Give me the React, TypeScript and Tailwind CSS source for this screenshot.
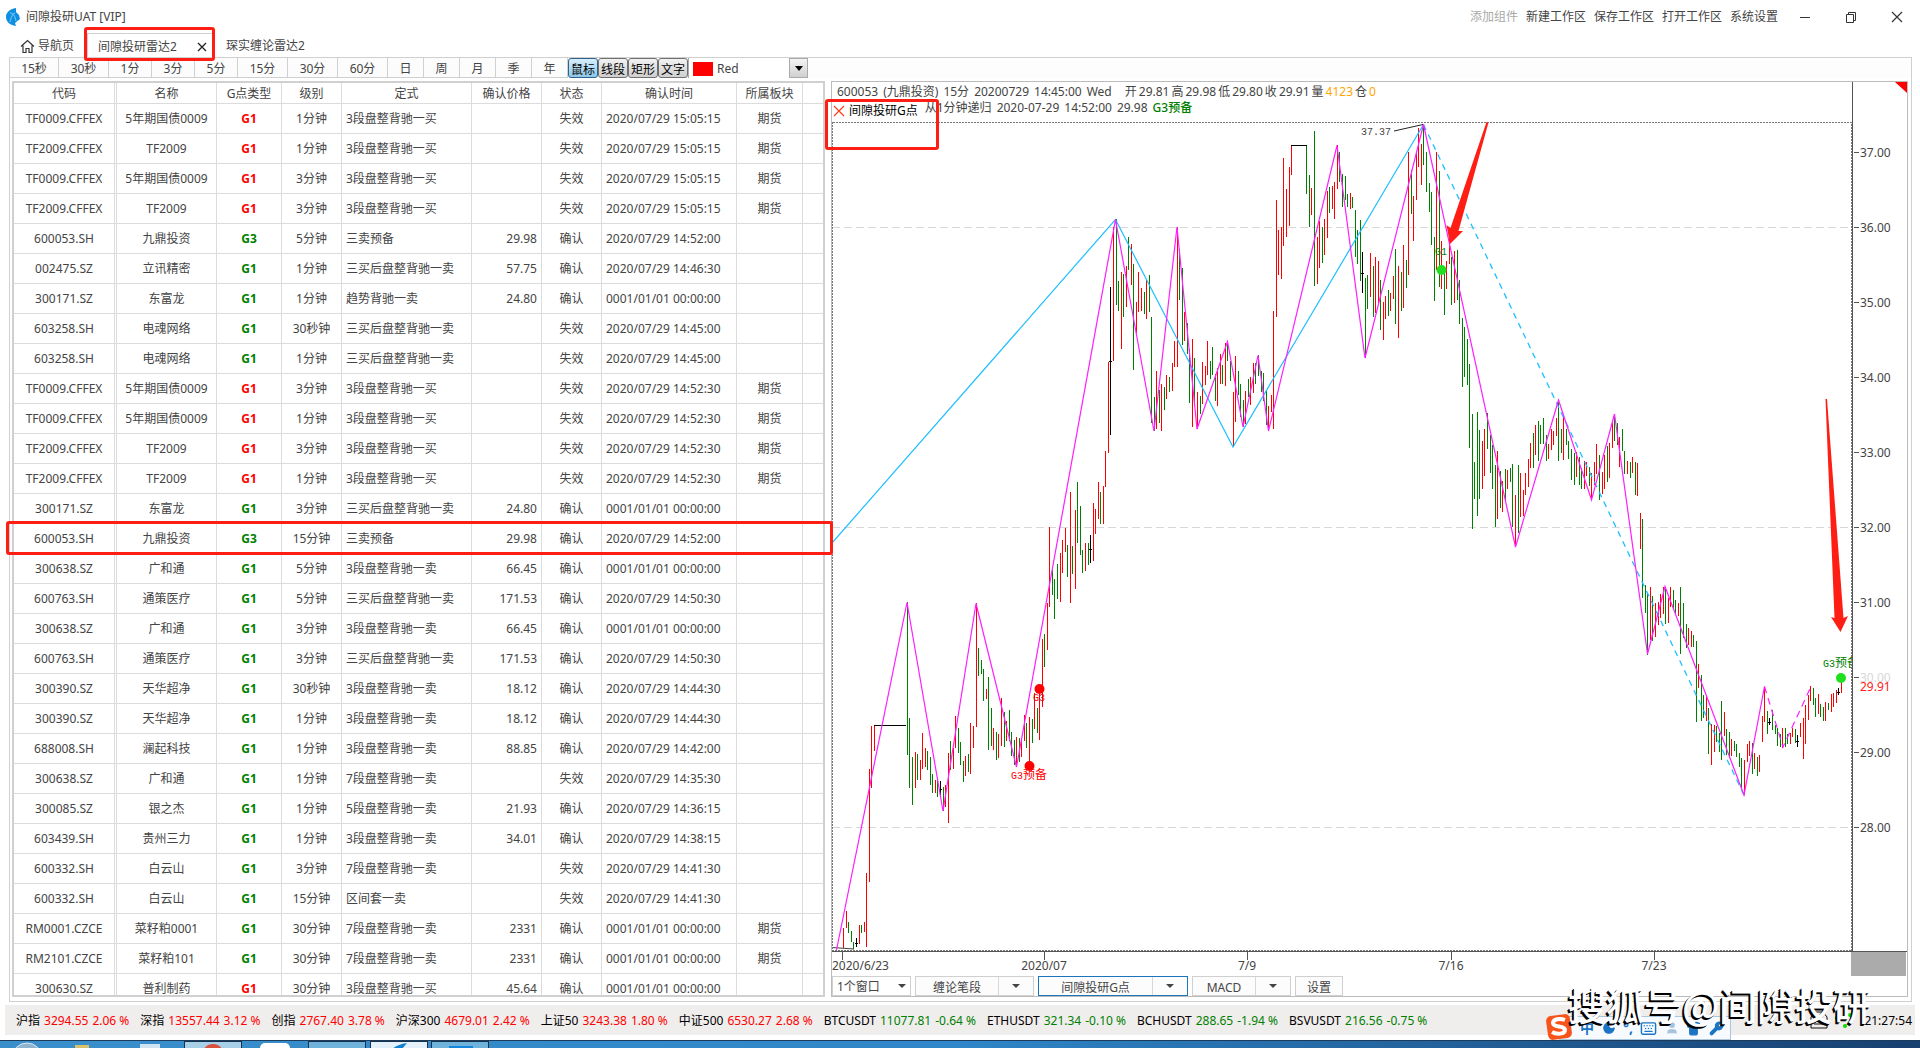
import { useState } from "react";
import { Moon, Shirt, Wrench, Keyboard, User } from "lucide-react";

const FONT = "font-['Noto_Sans','Noto_Sans_CJK_SC',sans-serif]";

const periods = [
  { label: "15秒", width: "w-[49px]" },
  { label: "30秒", width: "w-[50px]" },
  { label: "1分", width: "w-[43px]" },
  { label: "3分", width: "w-[43px]" },
  { label: "5分", width: "w-[43px]" },
  { label: "15分", width: "w-[50px]" },
  { label: "30分", width: "w-[50px]" },
  { label: "60分", width: "w-[50px]" },
  { label: "日", width: "w-9" },
  { label: "周", width: "w-9" },
  { label: "月", width: "w-9" },
  { label: "季", width: "w-9" },
  { label: "年", width: "w-9" },
];

const columns = [
  { label: "代码", width: "w-[103px]" },
  { label: "名称", width: "w-[100px]" },
  { label: "G点类型", width: "w-[65px]" },
  { label: "级别", width: "w-[60px]" },
  { label: "定式", width: "w-[130px]" },
  { label: "确认价格", width: "w-[70px]" },
  { label: "状态", width: "w-[60px]" },
  { label: "确认时间", width: "w-[135px]" },
  { label: "所属板块", width: "w-[66px]" },
  { label: "", width: "w-5" },
];

// code, name, type, level, pattern, price, status, time, sector
const rows: string[][] = [
  ["TF0009.CFFEX", "5年期国债0009", "G1", "1分钟", "3段盘整背驰一买", "", "失效", "2020/07/29 15:05:15", "期货"],
  ["TF2009.CFFEX", "TF2009", "G1", "1分钟", "3段盘整背驰一买", "", "失效", "2020/07/29 15:05:15", "期货"],
  ["TF0009.CFFEX", "5年期国债0009", "G1", "3分钟", "3段盘整背驰一买", "", "失效", "2020/07/29 15:05:15", "期货"],
  ["TF2009.CFFEX", "TF2009", "G1", "3分钟", "3段盘整背驰一买", "", "失效", "2020/07/29 15:05:15", "期货"],
  ["600053.SH", "九鼎投资", "G3", "5分钟", "三卖预备", "29.98", "确认", "2020/07/29 14:52:00", ""],
  ["002475.SZ", "立讯精密", "G1", "1分钟", "三买后盘整背驰一卖", "57.75", "确认", "2020/07/29 14:46:30", ""],
  ["300171.SZ", "东富龙", "G1", "1分钟", "趋势背驰一卖", "24.80", "确认", "0001/01/01 00:00:00", ""],
  ["603258.SH", "电魂网络", "G1", "30秒钟", "三买后盘整背驰一卖", "", "失效", "2020/07/29 14:45:00", ""],
  ["603258.SH", "电魂网络", "G1", "1分钟", "三买后盘整背驰一卖", "", "失效", "2020/07/29 14:45:00", ""],
  ["TF0009.CFFEX", "5年期国债0009", "G1", "3分钟", "3段盘整背驰一买", "", "失效", "2020/07/29 14:52:30", "期货"],
  ["TF0009.CFFEX", "5年期国债0009", "G1", "1分钟", "3段盘整背驰一买", "", "失效", "2020/07/29 14:52:30", "期货"],
  ["TF2009.CFFEX", "TF2009", "G1", "3分钟", "3段盘整背驰一买", "", "失效", "2020/07/29 14:52:30", "期货"],
  ["TF2009.CFFEX", "TF2009", "G1", "1分钟", "3段盘整背驰一买", "", "失效", "2020/07/29 14:52:30", "期货"],
  ["300171.SZ", "东富龙", "G1", "3分钟", "三买后盘整背驰一卖", "24.80", "确认", "0001/01/01 00:00:00", ""],
  ["600053.SH", "九鼎投资", "G3", "15分钟", "三卖预备", "29.98", "确认", "2020/07/29 14:52:00", ""],
  ["300638.SZ", "广和通", "G1", "5分钟", "3段盘整背驰一卖", "66.45", "确认", "0001/01/01 00:00:00", ""],
  ["600763.SH", "通策医疗", "G1", "5分钟", "三买后盘整背驰一卖", "171.53", "确认", "2020/07/29 14:50:30", ""],
  ["300638.SZ", "广和通", "G1", "3分钟", "3段盘整背驰一卖", "66.45", "确认", "0001/01/01 00:00:00", ""],
  ["600763.SH", "通策医疗", "G1", "3分钟", "三买后盘整背驰一卖", "171.53", "确认", "2020/07/29 14:50:30", ""],
  ["300390.SZ", "天华超净", "G1", "30秒钟", "3段盘整背驰一卖", "18.12", "确认", "2020/07/29 14:44:30", ""],
  ["300390.SZ", "天华超净", "G1", "1分钟", "3段盘整背驰一卖", "18.12", "确认", "2020/07/29 14:44:30", ""],
  ["688008.SH", "澜起科技", "G1", "1分钟", "3段盘整背驰一卖", "88.85", "确认", "2020/07/29 14:42:00", ""],
  ["300638.SZ", "广和通", "G1", "1分钟", "7段盘整背驰一卖", "", "失效", "2020/07/29 14:35:30", ""],
  ["300085.SZ", "银之杰", "G1", "1分钟", "5段盘整背驰一卖", "21.93", "确认", "2020/07/29 14:36:15", ""],
  ["603439.SH", "贵州三力", "G1", "1分钟", "3段盘整背驰一卖", "34.01", "确认", "2020/07/29 14:38:15", ""],
  ["600332.SH", "白云山", "G1", "3分钟", "7段盘整背驰一卖", "", "失效", "2020/07/29 14:41:30", ""],
  ["600332.SH", "白云山", "G1", "15分钟", "区间套一卖", "", "失效", "2020/07/29 14:41:30", ""],
  ["RM0001.CZCE", "菜籽粕0001", "G1", "30分钟", "7段盘整背驰一卖", "2331", "确认", "0001/01/01 00:00:00", "期货"],
  ["RM2101.CZCE", "菜籽粕101", "G1", "30分钟", "7段盘整背驰一卖", "2331", "确认", "0001/01/01 00:00:00", "期货"],
  ["300630.SZ", "普利制药", "G1", "30分钟", "3段盘整背驰一买", "45.64", "确认", "0001/01/01 00:00:00", ""],
];

const quotes = [
  { name: "沪指", price: "3294.55", change: "2.06 %", up: true },
  { name: "深指", price: "13557.44", change: "3.12 %", up: true },
  { name: "创指", price: "2767.40", change: "3.78 %", up: true },
  { name: "沪深300", price: "4679.01", change: "2.42 %", up: true },
  { name: "上证50", price: "3243.38", change: "1.80 %", up: true },
  { name: "中证500", price: "6530.27", change: "2.68 %", up: true },
  { name: "BTCUSDT", price: "11077.81", change: "-0.64 %", up: false },
  { name: "ETHUSDT", price: "321.34", change: "-0.10 %", up: false },
  { name: "BCHUSDT", price: "288.65", change: "-1.94 %", up: false },
  { name: "BSVUSDT", price: "216.56", change: "-0.75 %", up: false },
];

// High-low bars. Each entry is "colour x high low" in thirds of a unit from the segment origin.
const segments = [
  {
    x: 830,
    y: 560,
    bars:
      "r 40 1105 1165,r 49 1052 1105,g 55 1085 1120,g 64 1112 1147,g 70 1145 1168,k 79 1135 1162,r 88 1094 1153,g 94 1094 1120,r 103 1087 1116,r 109 940 1160,r 118 628 965,r 124 497 685,r 133 497 572,g 232 127 586,g 238 475 685,g 247 592 734,r 256 577 685,g 262 583 661,r 271 601 661,r 277 520 626,r 286 565 620,g 292 574 631,g 301 590 676,g 307 643 700,r 316 661 700,g 322 655 712,k 331 664 709,g 340 682 754,r 346 676 740,r 355 580 788,g 361 544 631,r 370 565 626,r 376 469 565,g 385 505 580,g 391 547 616,g 400 604 667,r 406 589 649,g 415 583 637,r 421 490 643,r 430 497 565,r 439 130 502,g 445 265 349,g 454 301 343,g 460 328 424,r 469 388 418,g 475 352 571,g 484 445 559,r 490 505 571,g 499 517 601,r 505 523 595,r 514 415 559,g 523 457 562,r 529 484 544,g 538 451 544,g 544 517 589,g 553 541 616,r 559 532 622,g 568 535 607,r 574 541 592,r 583 466 544,g 589 490 565,r 598 472 610,g 607 478 550,r 613 400 508,g 622 445 520,r 628 385 541,r 637 238 442,g 643 223 322",
  },
  {
    x: 1030,
    y: 440,
    bars:
      "r 52 490 631,r 58 262 500,g 67 390 464,g 73 418 536,g 82 373 476,r 91 340 485,r 97 301 398,r 106 265 335,g 112 316 410,r 121 157 488,g 127 319 401,r 136 211 446,g 142 127 308,g 151 199 344,g 157 331 398,r 166 310 392,g 175 310 374,k 181 286 370,r 190 190 362,r 196 208 281,r 205 127 236,g 211 157 251,r 220 139 251,r 226 34 140",
  },
  {
    x: 1060,
    y: 110,
    bars:
      "r 145 757 1028,k 151 532 976,r 160 352 754,g 169 328 586,g 175 514 604,r 184 487 718,g 190 493 622,r 199 469 592,g 205 382 481,r 214 403 526,g 220 463 779,r 229 577 670,r 235 487 607,r 244 535 604,g 253 547 613,r 259 511 626,g 268 496 607,g 274 622 940,g 283 862 964,r 289 784 958,g 298 841 940,r 304 823 964,g 313 832 901,r 319 796 868,g 328 802 847,r 337 760 844,r 343 694 772,r 352 352 770,g 358 418 569,g 367 475 706,r 373 607 694,g 382 640 733,g 388 718 878,r 397 688 952,g 403 745 880,r 412 847 958,g 421 859 913,r 427 757 883,r 436 769 826,r 442 694 796,g 451 754 808,g 457 712 796,g 466 793 874,r 472 775 888,r 481 733 823,g 487 766 823,r 496 700 829,g 502 694 754,g 511 752 814,r 520 847 1012,r 526 739 937,g 535 784 856,g 541 823 922,g 550 871 952,r 556 844 943,g 565 808 862,r 571 802 886,r 580 760 850,g 586 760 822,g 595 736 799,g 604 784 847,g 610 790 874,g 619 841 946,r 625 889 964,r 634 856 907,r 640 604 958,r 649 271 622,r 655 361 496,r 664 352 508,r 670 145 409,r 679 238 382,r 688 172 349,r 694 106 196,g 739 106 253,g 748 196 352,r 754 235 316,g 763 64 529,r 772 382 523,r 778 334 475,g 787 352 458,r 793 328 436,r 802 244 385,g 808 232 310,r 817 229 298,r 823 217 328,r 832 106 238,g 838 127 217,g 847 193 292,g 856 199 271,g 862 253 292,r 871 250 296,g 877 262 295,g 886 301 440,g 892 361 463,g 901 331 514,k 907 427 550,g 916 505 745,g 922 496 598,r 931 430 562,g 940 469 620,r 946 442 610,r 955 454 580,g 961 511 661,r 970 577 691,r 976 559 628,g 985 541 619,r 991 550 604,r 1000 499 568,g 1006 418 643,r 1015 469 685,g 1024 487 604,r 1030 406 595,g 1039 451 535",
  },
  {
    x: 1400,
    y: 110,
    bars:
      "r 25 127 496,g 34 180 313,r 40 259 394,r 49 130 271,r 55 55 172,r 64 103 226,g 70 45 166,g 79 127 247,g 88 220 307,g 94 247 406,g 103 382 574,r 109 127 479,g 118 184 532,r 124 394 536,g 133 480 616,r 139 454 538,r 148 370 463,g 154 442 584,r 163 424 578,g 172 421 571,g 178 511 643,g 187 625 830,g 193 652 802,g 202 688 824,g 208 763 1015,g 217 912 1256,g 223 1056 1168,g 232 907 1219,g 238 961 1168,r 247 994 1138,r 253 958 1099,g 262 910 1018,g 271 976 1090,g 277 1006 1138,g 286 1066 1252,r 292 1024 1228,g 301 1084 1193,r 307 1114 1207,g 316 1078 1170,r 322 1080 1138,g 331 1075 1117,g 337 1063 1250,r 346 1156 1310,g 355 1066 1270,r 361 1090 1222,r 370 1141 1219,r 376 1090 1156,r 385 1048 1132,r 391 1000 1074,g 400 970 1075,r 406 946 1036,g 415 934 1054,g 421 946 1003,g 430 925 1002,g 439 976 1054,r 445 1003 1048,r 454 958 1021,r 460 964 1006,r 469 925 979,g 475 870 1054,g 484 958 1030,r 490 916 1051,g 499 958 1006,g 505 994 1048,g 514 1018 1111,g 523 1030 1126,r 529 1027 1102,g 538 1042 1126,g 544 1075 1138,r 553 1054 1138,r 559 1057 1099,g 568 1072 1129,r 574 1090 1168,r 583 1057 1126,r 589 1003 1092,g 598 1036 1171,r 607 1087 1153,r 613 1036 1138,g 622 1009 1117,r 628 1000 1105,r 637 940 1015,g 643 913 994,g 652 940 1006,r 658 982 1072,g 667 958 1024,g 673 1024 1093,r 682 1054 1093,g 691 1057 1105,r 697 1042 1090,g 706 1057 1156,r 712 1060 1159,r 721 1210 1318,g 727 1228 1465",
  },
  {
    x: 1600,
    y: 400,
    bars:
      "g 136 556 640,g 142 580 764,r 151 562 720,g 157 589 724,r 166 610 712,r 175 607 676,r 181 583 655,r 190 562 643,g 196 560 673,r 205 595 670,r 211 562 620,g 220 571 628,g 226 601 640,r 235 610 648,g 241 562 763,g 250 610 715,g 259 673 745,r 265 685 735,r 274 694 742,g 280 706 740,g 289 724 967,r 295 793 865,g 304 826 964,g 310 886 955,r 319 887 964,g 325 925 1061,r 334 973 1096,r 343 976 1057,g 349 979 1027,g 358 1000 1057,g 364 904 1081,r 373 937 1009,g 379 988 1066,g 388 997 1075,r 394 1018 1069,g 403 1024 1054,g 409 1033 1072,g 418 1060 1102,g 424 1075 1165,r 433 1081 1186,r 442 1033 1087,r 448 1024 1069,g 457 1030 1123,r 463 1060 1108,g 472 1072 1129,r 478 1064 1117,r 487 949 1027,r 493 862 967,g 502 934 1003,k 508 955 976,g 517 931 991,g 526 976 1003,g 532 985 1039,g 541 1003 1042,r 547 985 1045,g 556 985 1042,g 562 1003 1033,r 571 1000 1033,r 577 985 1012,g 586 988 1030,k 592 1006 1042,r 601 970 1012,r 610 955 1078,r 616 916 1033,r 625 886 961,r 631 859 904,g 640 865 916,g 646 895 952,r 655 883 943,g 661 913 952,g 670 922 964,r 676 907 964,g 685 910 931,r 694 883 937,r 700 880 922,r 709 871 910,k 715 865 886,r 724 840 879",
  },
];

const barColors: Record<string, string> = { r: "#ff0000", g: "#008000", k: "#000000" };

const bars = segments.flatMap((s) =>
  s.bars.split(",").map((b) => {
    const [c, x, hi, lo] = b.split(" ");
    return {
      kind: c,
      color: barColors[c],
      x: Math.floor(s.x + Number(x) / 3),
      y1: Math.round(s.y + Number(hi) / 3),
      y2: Math.round(s.y + Number(lo) / 3),
    };
  })
);

const prices = [37, 36, 35, 34, 33, 32, 31, 30, 29, 28];
const priceY = (p: number) => 152 + (37 - p) * 75;

const dates = [
  { label: "2020/6/23", x: 842, anchor: "start" as const, tx: 832 },
  { label: "2020/07", x: 1044, anchor: "middle" as const, tx: 1044 },
  { label: "7/9", x: 1247, anchor: "middle" as const, tx: 1247 },
  { label: "7/16", x: 1451, anchor: "middle" as const, tx: 1451 },
  { label: "7/23", x: 1654, anchor: "middle" as const, tx: 1654 },
];

function SignalLabel({ x, y, color, code, text }: { x: number; y: number; color: string; code: string; text?: string }) {
  return (
    <text x={x} y={y} fill={color} fontSize="12" fontFamily="'Noto Sans CJK SC', sans-serif">
      <tspan fontFamily="'Liberation Mono', monospace" fontSize="10">{code}</tspan>
      {text}
    </text>
  );
}

function Chart() {
  return (
    <svg viewBox="832 82 1075 894" preserveAspectRatio="none" className="block w-full h-full" fontFamily="'Noto Sans', sans-serif" fontSize="12" fill="#444">
      <defs>
        <clipPath id="plot">
          <rect x="832" y="122" width="1020" height="829" />
        </clipPath>
      </defs>

      {/* Grid */}
      {[36, 32, 28].map((p) => (
        <line key={p} x1="832" x2="1852" y1={priceY(p) + 0.5} y2={priceY(p) + 0.5} stroke="#d8d8d8" strokeDasharray="8 4" />
      ))}

      <g clipPath="url(#plot)">
        <g shapeRendering="crispEdges">
          {bars.map((b, i) => (
            <g key={i} fill={b.color}>
              <rect x={b.x} y={b.y1} width="1" height={Math.max(1, b.y2 - b.y1)} />
              {b.kind === "k" && <rect x={b.x - 1} y={Math.round((b.y1 + b.y2) / 2)} width="3" height="1" />}
            </g>
          ))}
          <rect x="874" y="725" width="32" height="1" fill="#000" />
          <rect x="1291" y="145" width="16" height="1" fill="#000" />
        </g>

        <path d="M832 947.5L854 949" stroke="#444" fill="none" />
        <path d="M832 543L1115.5 219.5L1233 447L1423.5 124.5" stroke="#1ebfff" strokeWidth="1.2" fill="none" />
        <path d="M1423.5 124.5L1744 795" stroke="#1ebfff" strokeWidth="1.3" strokeDasharray="6 5" fill="none" />
        <path
          d="M836.5 950L907 602.5L943 811L976 603.5L1016.5 767L1115.5 219.5L1154 431L1177 227L1197 429L1227.5 341.5L1243 427L1258 355.5L1268.5 431L1337 145.5L1365 358L1423.5 124.5L1515.5 547L1558.5 400L1591.5 500L1614.5 414L1647.5 654L1665 586.5L1744 795L1764.5 686.5"
          stroke="#ff1eff"
          strokeWidth="1.2"
          fill="none"
        />
        <path d="M1764.5 686.5L1783 747L1811 686.5" stroke="#ff1eff" strokeWidth="1.2" strokeDasharray="7 5" fill="none" />

        {/* Signals */}
        <circle cx="1039.5" cy="689" r="5" fill="#ff0000" />
        <SignalLabel x={1033} y={701} color="#e60000" code="G3" />
        <circle cx="1029.5" cy="766" r="5" fill="#ff0000" />
        <SignalLabel x={1011} y={779} color="#ff0000" code="G3" text="预备" />
        <SignalLabel x={1435} y={255} color="#008000" code="G1" />
        <circle cx="1441.5" cy="270" r="5" fill="#1ee01e" />
        <SignalLabel x={1823} y={667} color="#008000" code="G3" text="预备" />
        <circle cx="1841" cy="678" r="5" fill="#1ee01e" />
      </g>

      <text x="1361" y="135" fontFamily="'Liberation Mono', monospace" fontSize="10">37.37</text>
      <path d="M1394 131L1423 124.5" stroke="#222" fill="none" />

      {/* Plot frame */}
      <g shapeRendering="crispEdges" fill="none">
        <path d="M832.5 122.5H1851.5V950.5H832.5Z" stroke="#777" strokeDasharray="2 1" />
        <path d="M1852.5 82V951.5" stroke="#555" />
        <path d="M832 951.5H1907" stroke="#555" />
      </g>

      {/* Price axis */}
      {prices.map((p) => (
        <g key={p}>
          <path d={`M1854 ${priceY(p) + 0.5}H1859`} stroke="#555" />
          <text x="1860" y={priceY(p) + 5} fill={p === 30 ? "#d8d8d8" : "#444"}>{p.toFixed(2)}</text>
        </g>
      ))}
      <text x="1860" y="691" fill="#ff2020">29.91</text>

      {/* Time axis */}
      {dates.map((d) => (
        <g key={d.label}>
          <path d={`M${d.x + 0.5} 952V960`} stroke="#555" />
          <text x={d.tx} y="970" textAnchor={d.anchor}>{d.label}</text>
        </g>
      ))}
      <rect x="1851" y="952" width="55" height="25" fill="#ababab" />
      <path d="M1895 82H1907V93Z" fill="#ff0000" />

      {/* Marker arrows */}
      <path d="M1486.5 122L1488.5 122.5L1458.5 231L1463 231L1450 244L1446.5 225L1450.5 228Z" fill="#ff1e14" />
      <path d="M1825.5 399H1827L1843.5 618L1848 616L1840.5 632L1831 617L1834.5 618Z" fill="#ff1e14" />
    </svg>
  );
}

function Caret() {
  return <span className="inline-block border-x-4 border-t-4 border-x-transparent border-t-[#444]" />;
}

function SplitButton({ label, active, width }: { label: string; active?: boolean; width: string }) {
  return (
    <div className={`flex h-5 bg-[#fcfcfc] border ${width} ${active ? "border-[#1a75bb]" : "border-[#d0d0d0]"}`}>
      <button className="flex-1 leading-[21px]">{label}</button>
      <button aria-label={`${label} 选项`} className="flex items-center justify-center w-[35px] border-l border-[#d8d8d8]">
        <Caret />
      </button>
    </div>
  );
}

function TitleBar() {
  return (
    <header className="flex items-center h-[33px] pl-[5px] pr-4">
      <svg width="16" height="18" viewBox="0 0 16 18" className="mr-[5px]">
        <path d="M11 0C4 1 1 5 1 9s3 8 10 9l-1-3 5-4-1-4-3-3z" fill="#0f8fe0" />
        <path d="M5 5c3 0 5 3 6 8M10 5c-3 1-4 5-5 9" stroke="#7fd0ff" fill="none" />
      </svg>
      <h1 className="flex-1">间隙投研UAT [VIP]</h1>
      <nav className="flex gap-2">
        <button className="text-[#a9a9a9]">添加组件</button>
        <button>新建工作区</button>
        <button>保存工作区</button>
        <button>打开工作区</button>
        <button>系统设置</button>
      </nav>
      <button aria-label="最小化" className="ml-5">
        <svg width="14" height="14" viewBox="0 0 14 14" stroke="#333" fill="none"><path d="M2 7.5h10" /></svg>
      </button>
      <button aria-label="还原" className="ml-8">
        <svg width="14" height="14" viewBox="0 0 14 14" stroke="#333" fill="none"><path d="M2.5 4.5h7v8h-7zM4.5 4.5v-2h7v8h-2" /></svg>
      </button>
      <button aria-label="关闭" className="ml-8">
        <svg width="14" height="14" viewBox="0 0 14 14" stroke="#333" fill="none"><path d="M2 2l10 10M12 2L2 12" strokeWidth="1.2" /></svg>
      </button>
    </header>
  );
}

function Tabs() {
  return (
    <nav className="flex h-6 items-center pl-5">
      <button className="flex items-center gap-[3px] w-[67px] pt-[2px]">
        <svg width="15" height="15" viewBox="0 0 15 15" fill="none" stroke="#333" strokeWidth="1.2">
          <path d="M1 7.5L7.5 1.5L14 7.5M3 6.5V13.5H6V9.5H9V13.5H12V6.5" />
        </svg>
        导航页
      </button>
      <div className="flex items-center justify-between w-[127px] h-6 pt-[2px] pl-[10px] pr-[6px] border-t border-x border-[#d0d0d0]">
        <button>间隙投研雷达2</button>
        <button aria-label="关闭标签">
          <svg width="10" height="10" viewBox="0 0 10 10" stroke="#222" strokeWidth="1.3"><path d="M1 1l8 8M9 1L1 9" /></svg>
        </button>
      </div>
      <button className="ml-3 pt-[2px]">琛实缠论雷达2</button>
    </nav>
  );
}

function Toolbar({ tool, onTool }: { tool: string; onTool: (t: string) => void }) {
  return (
    <div className="flex h-5 bg-[#fdfdfd]">
      {periods.map((p) => (
        <button key={p.label} className={`${p.width} h-5 leading-[22px] bg-[#fcfcfc] border-r border-b border-[#d0d0d0]`}>
          {p.label}
        </button>
      ))}
      {["鼠标", "线段", "矩形", "文字"].map((t) => (
        <button
          key={t}
          onClick={() => onTool(t)}
          className={`w-[30px] h-5 leading-[21px] text-black border rounded-[3px] ${
            tool === t
              ? "border-[#2c628b] bg-linear-to-b from-[#d8effb] to-[#8cc8e8]"
              : "border-[#707070] bg-linear-to-b from-[#f2f2f2] to-[#cfcfcf]"
          }`}
        >
          {t}
        </button>
      ))}
      <label className="relative flex w-[120px] h-5 border-l border-[#aaa] bg-white">
        <span className="absolute left-1 top-1 w-5 h-[14px] bg-[#ff0000]" />
        <select aria-label="颜色" className="appearance-none flex-1 pl-7 pt-[2px] outline-none">
          <option>Red</option>
        </select>
        <span className="absolute right-0 top-0 flex items-center justify-center w-[19px] h-5 border border-[#aaa] bg-linear-to-b from-[#f4f4f4] to-[#d0d0d0] pointer-events-none">
          <span className="border-x-4 border-t-[5px] border-x-transparent border-t-black" />
        </span>
      </label>
    </div>
  );
}

function SignalTable() {
  const cell = "border-r border-b border-[#dcdcdc] p-0 whitespace-nowrap";
  return (
    <div className="min-h-0 overflow-hidden border-2 border-[#d0d0d0]">
      <table className="table-fixed w-full border-separate border-spacing-0">
        <thead>
          <tr>
            {columns.map((c, i) => (
              <th
                key={c.label}
                className={`${c.width} h-[21px] p-0 pt-[2px] font-normal border-b border-[#dcdcdc] ${i === 0 ? "border-r-3 [border-right-style:double]" : "border-r last:border-r-0"}`}
              >
                {c.label}
              </th>
            ))}
          </tr>
        </thead>
        <tbody>
          {rows.map((r, i) => (
            <tr key={i} className="h-[30px] text-center">
              <td className="h-[30px] p-0 border-b border-r-3 [border-right-style:double] border-[#dcdcdc]">{r[0]}</td>
              <td className={cell}>{r[1]}</td>
              <td className={`${cell} font-bold ${r[4].endsWith("买") ? "text-[#ff0000]" : "text-[#008000]"}`}>{r[2]}</td>
              <td className={cell}>{r[3]}</td>
              <td className={`${cell} text-left pl-1`}>{r[4]}</td>
              <td className={`${cell} text-right pr-1`}>{r[5]}</td>
              <td className={cell}>{r[6]}</td>
              <td className={`${cell} text-left pl-1`}>{r[7]}</td>
              <td className={cell}>{r[8]}</td>
              <td className="border-b border-[#dcdcdc] p-0" />
            </tr>
          ))}
        </tbody>
      </table>
    </div>
  );
}

function ChartPanel() {
  return (
    <section className="relative flex flex-col min-w-0 min-h-0 border border-[#bbb]">
      <div className="flex-1 min-h-0">
        <Chart />
      </div>
      <div className="absolute left-[5px] top-[2px] flex flex-col leading-4 whitespace-nowrap">
        <p className="flex gap-[5px]">
          <span>600053</span>
          <span>(九鼎投资)</span>
          <span>15分</span>
          <span>20200729</span>
          <span>14:45:00</span>
          <span>Wed</span>
          <span className="flex gap-[2px] ml-2">
            <span>开</span><span>29.81</span><span>高</span><span>29.98</span><span>低</span><span>29.80</span>
            <span>收</span><span>29.91</span><span>量</span><span className="text-[#ffa500]">4123</span>
            <span>仓</span><span className="text-[#ffa500]">0</span>
          </span>
        </p>
        <p className="flex gap-[5px]">
          <button className="flex items-center text-black pt-[3px] -ml-1 mr-[2px]">
            <svg width="12" height="12" viewBox="0 0 12 12" stroke="#ff3b1e" strokeWidth="1.2" className="mr-1"><path d="M1 1l10 10M11 1L1 11" /></svg>
            间隙投研G点
          </button>
          <span>从1分钟递归</span>
          <span>2020-07-29</span>
          <span>14:52:00</span>
          <span>29.98</span>
          <span className="font-medium text-[#008000]">G3预备</span>
        </p>
      </div>
      <div className="flex h-5 gap-1">
        <label className="relative flex items-center w-[79px] h-5 border border-[#d0d0d0] bg-white">
          <select aria-label="窗口数" className="appearance-none w-full h-full pl-1 pt-[2px] outline-none">
            <option>1个窗口</option>
          </select>
          <span className="absolute right-1 flex pointer-events-none"><Caret /></span>
        </label>
        <SplitButton label="缠论笔段" width="w-[119px]" />
        <SplitButton label="间隙投研G点" width="w-[150px]" active />
        <SplitButton label="MACD" width="w-[99px]" />
        <button className="w-12 h-5 leading-[21px] border border-[#d0d0d0] bg-[#fcfcfc]">设置</button>
      </div>
    </section>
  );
}

function StatusBar() {
  return (
    <footer className="flex items-center gap-[11px] h-[30px] mt-[3px] mx-[5px] pt-[2px] pl-[11px] pr-[3px] bg-[#f0eded] text-black whitespace-nowrap">
      {quotes.map((q) => (
        <span key={q.name} className="flex gap-1">
          <span>{q.name}</span>
          <span className={q.up ? "text-[#ff0000]" : "text-[#008000]"}>{q.price}</span>
          <span className={q.up ? "text-[#ff0000]" : "text-[#008000]"}>{q.change}</span>
        </span>
      ))}
      <svg width="44" height="24" viewBox="0 0 44 24" className="ml-auto">
        <path d="M2 8l4-5h8l4 5v11H2zM5 11h10M5 15h10" fill="none" stroke="#111" />
        <circle cx="28" cy="9" r="2" fill="#00dd00" />
        <circle cx="36" cy="17" r="2" fill="#00dd00" />
        <circle cx="41" cy="6" r="2" fill="#00dd00" />
      </svg>
      <time>21:27:54</time>
    </footer>
  );
}

function Taskbar() {
  return (
    <div className="flex h-2 mt-[5px] border-t border-[#1d3c5c] bg-linear-to-r from-[#3a8fcb] via-[#2f86c8] to-[#173f70] overflow-hidden">
      <svg width="500" height="8" viewBox="0 0 500 8">
        <circle cx="27" cy="17" r="15" fill="#8fb4cf" stroke="#dbe9f4" />
        <rect x="75" y="4" width="14" height="6" fill="#d9c26a" />
        <rect x="140" y="3" width="20" height="6" fill="#cfe3f2" />
        <g fill="#a7cfe8" stroke="#16324f">
          <rect x="184.5" y=".5" width="57" height="10" />
          <rect x="308.5" y=".5" width="57" height="10" fill="#6fb2dc" />
          <rect x="370.5" y=".5" width="57" height="10" fill="#e4f1fa" />
          <rect x="431.5" y=".5" width="57" height="10" fill="#6fb2dc" />
        </g>
        <circle cx="213" cy="14" r="11" fill="#d9503c" />
        <rect x="260" y="2" width="30" height="12" rx="5" fill="#fff" />
        <path d="M392 8c4-3 8-5 15-6l-5 6z" fill="#1080d0" />
        <rect x="449" y="5" width="24" height="4" fill="#1287dd" />
      </svg>
    </div>
  );
}

function InputMethodBar() {
  return (
    <div className="absolute right-[189px] bottom-2 flex items-center h-6 w-[172px] pl-[20px] pr-[6px] justify-between bg-[#f7fbff] border border-[#a9c8e0] text-[#1b74c4]">
      <svg width="28" height="28" viewBox="0 0 28 28" className="absolute -left-[15px] -top-[4px]">
        <rect x="2" y="2" width="24" height="24" rx="5" fill="#f8531b" transform="rotate(-8 14 14)" />
        <path d="M20 7c-5-2-12-1-12 3 0 5 12 2 12 7 0 4-8 5-13 2" fill="none" stroke="#fff" strokeWidth="4" />
      </svg>
      <span className="text-sm font-bold">中</span>
      <Moon size={14} fill="#1b74c4" />
      <span className="text-sm font-bold">°,</span>
      <Keyboard size={17} />
      <User size={14} fill="#a9c3dc" stroke="#a9c3dc" />
      <Shirt size={15} fill="#1b74c4" />
      <Wrench size={15} fill="#1b74c4" />
    </div>
  );
}

export default function App() {
  const [tool, setTool] = useState("鼠标");

  return (
    <div className={`relative flex flex-col h-screen overflow-hidden bg-white text-xs text-[#444] ${FONT}`}>
      <TitleBar />
      <Tabs />
      <main className="flex flex-col flex-1 min-h-0 ml-[9px] mr-2 border border-[#d0d0d0]">
        <Toolbar tool={tool} onTool={setTool} />
        <div className="grid grid-cols-[813px_minmax(0,1fr)] grid-rows-[minmax(0,1fr)] gap-[6px] flex-1 min-h-0 mt-[3px] mb-1 ml-[2px] mr-[3px]">
          <SignalTable />
          <ChartPanel />
        </div>
      </main>
      <StatusBar />
      <Taskbar />
      <InputMethodBar />

      {/* Highlight frames */}
      <div className="absolute left-[84px] top-[27px] w-[131px] h-[34px] border-3 border-[#ff1e14] rounded-[3px] pointer-events-none" />
      <div className="absolute left-[6px] top-[521px] w-[827px] h-[34px] border-3 border-[#ff1e14] rounded-[3px] pointer-events-none" />
      <div className="absolute left-[825px] top-[99px] w-[114px] h-[51px] border-3 border-[#ff1e14] rounded-[3px] pointer-events-none" />

      <p className="absolute right-[49px] bottom-4 text-[38px] leading-[56px] font-medium text-white font-['Noto_Sans_CJK_SC',sans-serif] [text-shadow:-2px_2px_0_#000,-1px_1px_0_#000] pointer-events-none">
        搜狐号@间隙投研
      </p>
    </div>
  );
}
